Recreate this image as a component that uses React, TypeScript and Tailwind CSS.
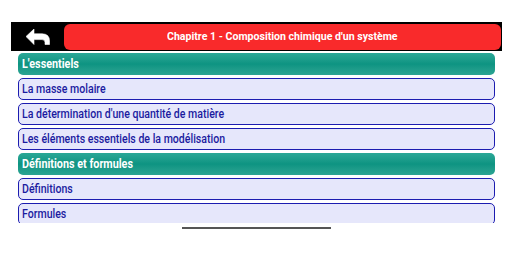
const sections = [
  {
    title: "L'essentiels",
    items: [
      "La masse molaire",
      "La détermination d'une quantité de matière",
      "Les éléments essentiels de la modélisation",
    ],
  },
  {
    title: "Définitions et formules",
    items: ["Définitions", "Formules"],
  },
];

function BackIcon() {
  return (
    <svg viewBox="0 0 24 16" className="h-[16px] w-[24px]" fill="white">
      <path
        d="M0 7.5 L8 0 L8 4.8 L16 4.8 Q23.5 4.8 23.5 12 L23.5 15.5 L19 15.5 L19 13.5 Q19 10.6 16 10.6 L8 10.6 L8 15.5 Z"
        strokeLinejoin="round"
        stroke="white"
        strokeWidth="0.6"
      />
    </svg>
  );
}

export default function App() {
  return (
    <div
      className="flex h-[256px] w-[512px] flex-col bg-white pt-[22px]"
      style={{ fontFamily: "Roboto, 'Liberation Sans', sans-serif" }}
    >
      {/* Header */}
      <div className="ml-[11px] flex h-[29px] w-[491px] items-stretch bg-black pb-[1px] pr-[1px] pt-[2px]">
        <div className="flex w-[53px] items-center justify-center">
          <BackIcon />
        </div>
        <div className="flex flex-1 items-center justify-center rounded-[6px] bg-[#f92a2b] text-white">
          <span className="scale-x-[0.92] text-[11.5px] font-bold">
            Chapitre 1 - Composition chimique d'un système
          </span>
        </div>
      </div>

      {/* List */}
      <div className="ml-[18px] mt-[2px] flex h-[170px] w-[477px] flex-col gap-[3px] overflow-hidden">
        {sections.map((section) => (
          <div key={section.title} className="flex flex-col gap-[3px]">
            <div className="flex h-[22px] shrink-0 items-center rounded-[5px] bg-gradient-to-b from-[#2aa897] via-[#0d9482] to-[#2aa493] px-[4px] text-white">
              <span className="origin-left scale-x-[0.9] whitespace-nowrap text-[12px] font-bold">
                {section.title}
              </span>
            </div>
            {section.items.map((item) => (
              <div
                key={item}
                className="flex h-[22px] shrink-0 items-center rounded-[5px] border border-[#1c1cb0] bg-[#e6e7fb] px-[3px] text-[#1b1ba0]"
              >
                <span className="origin-left scale-x-[0.88] whitespace-nowrap text-[12px] font-medium">
                  {item}
                </span>
              </div>
            ))}
          </div>
        ))}
      </div>

      {/* Home indicator */}
      <div className="ml-[182px] mt-[4px] h-[2px] w-[149px] bg-[#555555]" />
    </div>
  );
}
